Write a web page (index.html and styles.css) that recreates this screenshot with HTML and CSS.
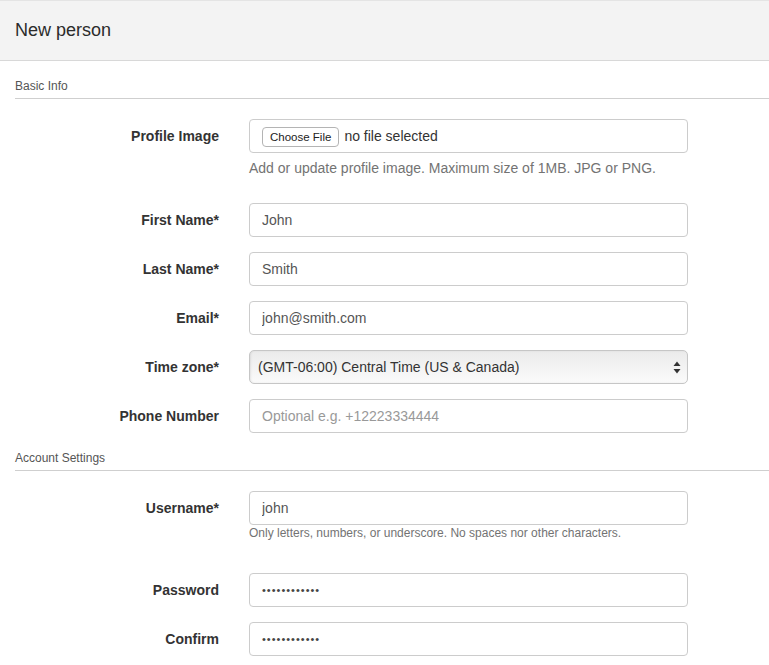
FILE: index.html
```html
<!DOCTYPE html>
<html lang="en">
<head>
<meta charset="utf-8">
<title>New person</title>
<link rel="stylesheet" href="styles.css">
</head>
<body>
<div class="page">
  <div class="page-header">New person</div>

  <div class="section-title">Basic Info</div>

  <div class="form-row">
    <label class="control-label">Profile Image</label>
    <div class="control">
      <div class="file-control">
        <button class="file-btn" type="button">Choose File</button>
        <span class="file-name">no file selected</span>
      </div>
      <p class="help-block">Add or update profile image. Maximum size of 1MB. JPG or PNG.</p>
    </div>
  </div>

  <div class="form-row">
    <label class="control-label">First Name*</label>
    <div class="control"><input class="form-control" type="text" value="John"></div>
  </div>

  <div class="form-row">
    <label class="control-label">Last Name*</label>
    <div class="control"><input class="form-control" type="text" value="Smith"></div>
  </div>

  <div class="form-row">
    <label class="control-label">Email*</label>
    <div class="control"><input class="form-control" type="text" value="john@smith.com"></div>
  </div>

  <div class="form-row">
    <label class="control-label">Time zone*</label>
    <div class="control">
      <div class="select-control">
        <span>(GMT-06:00) Central Time (US &amp; Canada)</span>
        <svg class="select-arrows" width="8" height="13" viewBox="0 0 8 13" aria-hidden="true">
          <path d="M4 0.5 L7.5 5 L0.5 5 Z" fill="#333"/>
          <path d="M4 12.5 L7.5 8 L0.5 8 Z" fill="#333"/>
        </svg>
      </div>
    </div>
  </div>

  <div class="form-row">
    <label class="control-label">Phone Number</label>
    <div class="control"><input class="form-control" type="text" placeholder="Optional e.g. +12223334444"></div>
  </div>

  <div class="section-title">Account Settings</div>

  <div class="form-row">
    <label class="control-label">Username*</label>
    <div class="control">
      <input class="form-control" type="text" value="john">
      <p class="help-small">Only letters, numbers, or underscore. No spaces nor other characters.</p>
    </div>
  </div>

  <div class="form-row">
    <label class="control-label">Password</label>
    <div class="control"><input class="form-control dots" type="text" value="••••••••••••"></div>
  </div>

  <div class="form-row">
    <label class="control-label">Confirm</label>
    <div class="control"><input class="form-control dots" type="text" value="••••••••••••"></div>
  </div>
</div>
</body>
</html>
```

FILE: styles.css
```css
* {
  box-sizing: border-box;
}

html, body {
  margin: 0;
  padding: 0;
  background: #fff;
}

body {
  font-family: "Liberation Sans", Arial, Helvetica, sans-serif;
  font-size: 14px;
  line-height: 20px;
  color: #333;
  overflow: hidden;
}

.page {
  width: 769px;
}

.page-header {
  height: 61px;
  border-top: 1px solid #e4e4e4;
  border-bottom: 1px solid #d8d8d8;
  background: #f3f3f3;
  padding-left: 15px;
  font-size: 18px;
  line-height: 58px;
  color: #2b2b2b;
}

.section-title {
  margin: 17px 0 20px 15px;
  padding-bottom: 3px;
  border-bottom: 1px solid #cfcfcf;
  font-size: 12px;
  line-height: 17px;
  color: #555;
}

.form-row {
  display: grid;
  grid-template-columns: 219px 439px;
  column-gap: 30px;
  margin-bottom: 15px;
}

.control-label {
  text-align: right;
  font-weight: bold;
  padding-top: 7px;
  line-height: 20px;
  color: #333;
}

.control {
  display: flex;
  flex-direction: column;
}

.form-control {
  width: 439px;
  height: 34px;
  margin: 0;
  padding: 6px 12px;
  border: 1px solid #cccccc;
  border-radius: 4px;
  background: #fff;
  font-family: "Liberation Sans", Arial, Helvetica, sans-serif;
  font-size: 14px;
  color: #555;
  outline: none;
}

.form-control::placeholder {
  color: #999;
}

.form-control.dots {
  font-size: 11px;
  letter-spacing: 1px;
  color: #444;
}

.file-control {
  height: 34px;
  border: 1px solid #cccccc;
  border-radius: 4px;
  padding: 0 12px;
  display: flex;
  align-items: center;
  gap: 5px;
}

.file-btn {
  height: 20px;
  margin: 1px 0 0;
  padding: 0 7px;
  border: 1px solid #b4b4b4;
  border-radius: 4px;
  background: #fff;
  font-family: "Liberation Sans", Arial, Helvetica, sans-serif;
  font-size: 11.5px;
  line-height: 18px;
  color: #222;
}

.file-name {
  font-size: 14px;
  color: #333;
}

.help-block {
  margin: 5px 0 10px;
  font-size: 14px;
  line-height: 20px;
  color: #737373;
}

.help-small {
  margin: 0 0 17px;
  font-size: 12px;
  line-height: 16px;
  color: #737373;
}

.select-control {
  width: 439px;
  height: 34px;
  border: 1px solid #c6c6c6;
  border-radius: 5px;
  background: linear-gradient(to bottom, #ebebeb 0%, #f3f3f3 50%, #fbfbfb 100%);
  box-shadow: inset 1px 0 2px rgba(0, 0, 0, 0.08);
  padding: 0 6px 0 8px;
  display: flex;
  align-items: center;
  justify-content: space-between;
  font-size: 14px;
  color: #333;
}

.select-arrows {
  display: block;
}
```
